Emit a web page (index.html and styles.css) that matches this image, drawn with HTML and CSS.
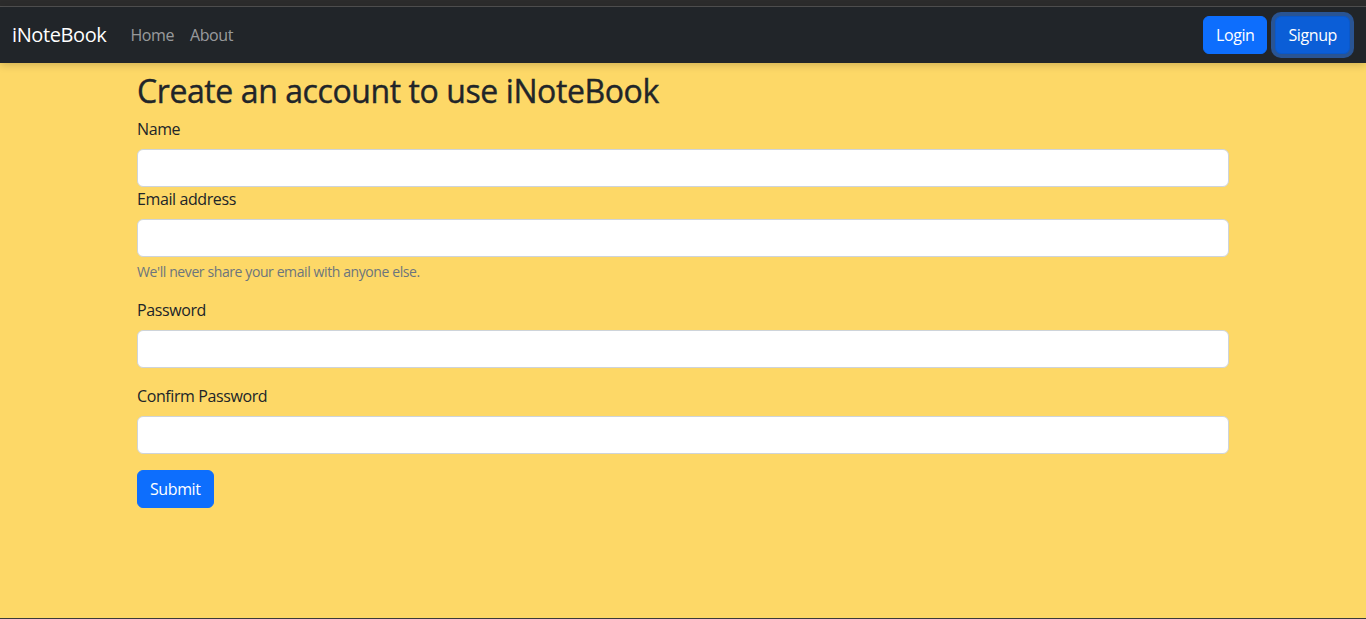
FILE: index.html
```html
<!DOCTYPE html>
<html lang="en">
<head>
<meta charset="utf-8">
<title>iNoteBook</title>
<link rel="stylesheet" href="styles.css">
</head>
<body>
<div class="topstrip"></div>
<nav class="navbar">
  <div class="nav-left">
    <a class="brand" href="#">iNoteBook</a>
    <a class="nav-link" href="#">Home</a>
    <a class="nav-link" href="#">About</a>
  </div>
  <div class="nav-right">
    <a class="btn btn-primary" href="#">Login</a>
    <a class="btn btn-primary btn-focus" href="#">Signup</a>
  </div>
</nav>
<main class="main">
  <div class="container">
    <h2 class="title">Create an account to use iNoteBook</h2>
    <form class="form">
      <div class="group">
        <label class="label">Name</label>
        <input class="input" type="text">
      </div>
      <div class="group mb">
        <label class="label">Email address</label>
        <input class="input" type="email">
        <div class="form-text">We'll never share your email with anyone else.</div>
      </div>
      <div class="group mb">
        <label class="label">Password</label>
        <input class="input" type="password">
      </div>
      <div class="group mb">
        <label class="label">Confirm Password</label>
        <input class="input" type="password">
      </div>
      <button class="btn btn-primary" type="button">Submit</button>
    </form>
  </div>
</main>
</body>
</html>
```
FILE: styles.css
```css
* { box-sizing: border-box; }
html, body { height: 100%; }
body {
  margin: 0;
  display: flex;
  flex-direction: column;
  font-family: "Open Sans", "Noto Sans", sans-serif;
  font-size: 16px;
  line-height: 1.5;
  letter-spacing: -0.025em;
  color: #212529;
  background: #fdd867;
}
.topstrip {
  height: 7px;
  background: #2c2c2c;
  border-bottom: 1px solid #515151;
  flex: none;
}
.navbar {
  flex: none;
  height: 56px;
  background: #212529;
  display: flex;
  align-items: center;
  justify-content: space-between;
  padding: 0 12px;
  box-shadow: 0 2px 8px rgba(0,0,0,.18);
  position: relative;
  z-index: 1;
}
.nav-left { display: flex; align-items: center; }
.brand {
  color: #fff;
  text-decoration: none;
  font-size: 20px;
  line-height: 30px;
  margin-right: 16px;
}
.nav-link {
  color: rgba(255,255,255,.55);
  text-decoration: none;
  padding: 8px;
}
.nav-right { display: flex; align-items: center; }
.btn {
  display: inline-block;
  font-family: inherit;
  font-size: 16px;
  line-height: 24px;
  letter-spacing: inherit;
  padding: 6px 12px;
  border: 1px solid #0d6efd;
  border-radius: 6px;
  text-decoration: none;
  cursor: pointer;
}
.btn-primary { background: #0d6efd; color: #fff; }
.nav-right .btn { margin: 0 4px; }
.btn-focus {
  background: #0b5ed7;
  border-color: #0a58ca;
  box-shadow: 0 0 0 4px rgba(49,132,253,.5);
}
.main {
  flex: 1;
  border-bottom: 1px solid #3a3a3a;
}
.container {
  width: 1140px;
  margin: 0 auto;
  padding: 0 24px;
}
.title {
  font-size: 32px;
  font-weight: 500;
  line-height: 1.2;
  letter-spacing: -0.013em;
  -webkit-text-stroke: 0.4px currentColor;
  margin: 9px 0 7px;
}
.group { display: flex; flex-direction: column; }
.mb { margin-bottom: 16px; }
.label { margin-bottom: 8px; }
.input {
  display: block;
  width: 100%;
  height: 38px;
  font: inherit;
  padding: 6px 12px;
  background: #fff;
  border: 1px solid #ced4da;
  border-radius: 6px;
}
.form-text {
  margin-top: 4px;
  font-size: 14px;
  line-height: 21px;
  color: #6c757d;
}
```
